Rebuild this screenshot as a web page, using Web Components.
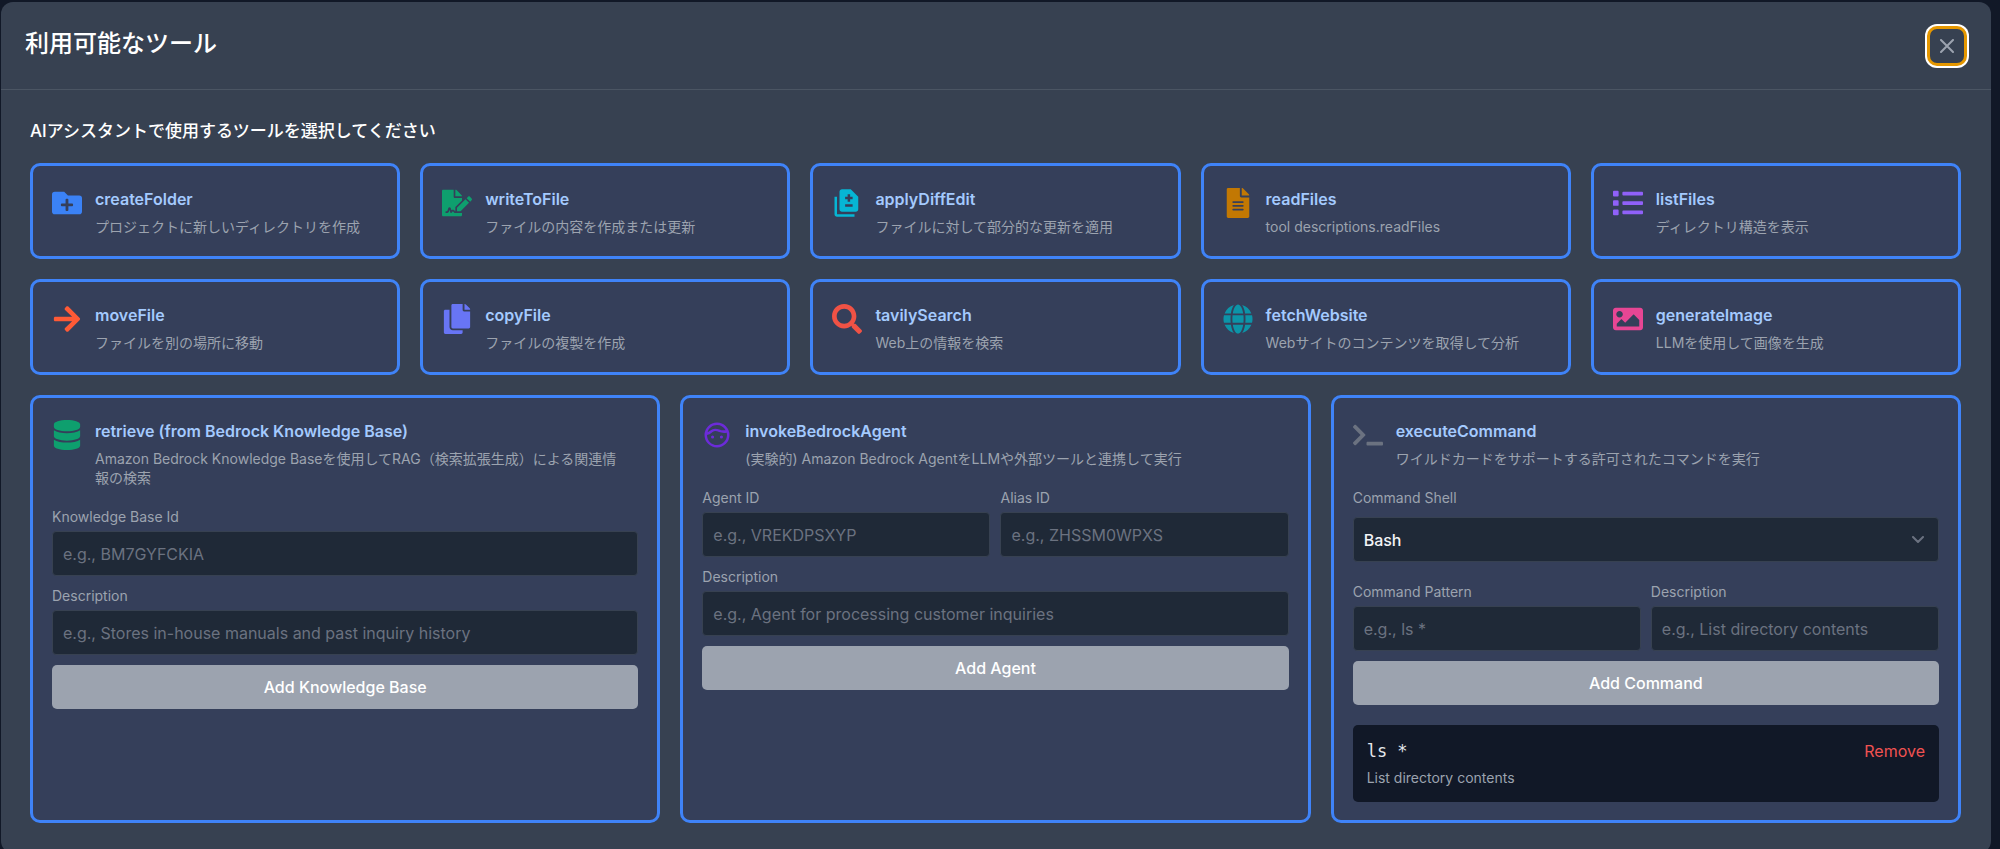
<!DOCTYPE html>
<html lang="ja">
<head>
<meta charset="utf-8">
<title>利用可能なツール</title>
<style>
  body { margin: 0; min-height: 100vh; background: #111827; color: #f9fafb; font-family: Inter, "Noto Sans CJK JP", sans-serif; }
</style>
</head>
<body>
<tools-dialog heading="利用可能なツール">
  <tool-grid columns="5">
    <tool-card icon="folderPlus" color="#3b82f6" name="createFolder">プロジェクトに新しいディレクトリを作成</tool-card>
    <tool-card icon="fileSignature" color="#0e9f6e" name="writeToFile">ファイルの内容を作成または更新</tool-card>
    <tool-card icon="difference" color="#06b6d4" name="applyDiffEdit">ファイルに対して部分的な更新を適用</tool-card>
    <tool-card icon="fileText" color="#c27803" name="readFiles">tool descriptions.readFiles</tool-card>
    <tool-card icon="list" color="#9061f9" name="listFiles">ディレクトリ構造を表示</tool-card>
    <tool-card icon="arrow" color="#ff5a36" name="moveFile">ファイルを別の場所に移動</tool-card>
    <tool-card icon="copy" color="#6875f5" name="copyFile">ファイルの複製を作成</tool-card>
    <tool-card icon="search" color="#f05245" name="tavilySearch">Web上の情報を検索</tool-card>
    <tool-card icon="globe" color="#0c94a8" name="fetchWebsite">Webサイトのコンテンツを取得して分析</tool-card>
    <tool-card icon="image" color="#e74694" name="generateImage">LLMを使用して画像を生成</tool-card>
  </tool-grid>
  <tool-grid columns="3">
    <tool-card icon="database" color="#0e9f6e" name="retrieve (from Bedrock Knowledge Base)">Amazon Bedrock Knowledge Baseを使用してRAG（検索拡張生成）による関連情報の検索
      <tool-form slot="form">
        <text-field label="Knowledge Base Id" placeholder="e.g., BM7GYFCKIA"></text-field>
        <text-field label="Description" placeholder="e.g., Stores in-house manuals and past inquiry history"></text-field>
        <add-button>Add Knowledge Base</add-button>
      </tool-form>
    </tool-card>
    <tool-card icon="face" color="#6c2bd9" name="invokeBedrockAgent">(実験的) Amazon Bedrock AgentをLLMや外部ツールと連携して実行
      <tool-form slot="form">
        <field-row>
          <text-field label="Agent ID" placeholder="e.g., VREKDPSXYP"></text-field>
          <text-field label="Alias ID" placeholder="e.g., ZHSSM0WPXS"></text-field>
        </field-row>
        <text-field label="Description" placeholder="e.g., Agent for processing customer inquiries"></text-field>
        <add-button>Add Agent</add-button>
      </tool-form>
    </tool-card>
    <tool-card icon="terminal" color="#6b7280" name="executeCommand">ワイルドカードをサポートする許可されたコマンドを実行
      <tool-form slot="form">
        <shell-select label="Command Shell"></shell-select>
        <field-row>
          <text-field label="Command Pattern" placeholder="e.g., ls *"></text-field>
          <text-field label="Description" placeholder="e.g., List directory contents"></text-field>
        </field-row>
        <add-button>Add Command</add-button>
        <command-entry pattern="ls *">List directory contents</command-entry>
      </tool-form>
    </tool-card>
  </tool-grid>
</tools-dialog>

<script>
const ICONS = {
  folderPlus: ['0 0 512 512', 'M464,128H272L208,64H48A48,48,0,0,0,0,112V400a48,48,0,0,0,48,48H464a48,48,0,0,0,48-48V176A48,48,0,0,0,464,128ZM359.5,296a16,16,0,0,1-16,16h-64v64a16,16,0,0,1-16,16h-16a16,16,0,0,1-16-16V312h-64a16,16,0,0,1-16-16V280a16,16,0,0,1,16-16h64V200a16,16,0,0,1,16-16h16a16,16,0,0,1,16,16v64h64a16,16,0,0,1,16,16Z'],
  fileSignature: ['0 0 576 512', 'M218.17 424.14c-2.95-5.92-8.09-6.52-10.17-6.52s-7.22.59-10.02 6.19l-7.67 15.34c-6.37 12.78-25.03 11.37-29.48-2.09L144 386.59l-10.61 31.88c-5.89 17.66-22.38 29.53-41 29.53H80c-8.84 0-16-7.16-16-16s7.16-16 16-16h12.39c4.83 0 9.11-3.08 10.64-7.66l18.19-54.64c3.3-9.81 12.44-16.41 22.78-16.41s19.48 6.59 22.77 16.41l13.88 41.64c19.75-16.19 54.06-9.7 66 14.16 1.89 3.78 5.49 5.95 9.36 6.26v-82.12l128-127.09V160H248c-13.2 0-24-10.8-24-24V0H24C10.7 0 0 10.7 0 24v464c0 13.3 10.7 24 24 24h336c13.3 0 24-10.7 24-24v-40l-128-.11c-16.12-.31-30.58-9.28-37.83-23.75zM384 121.9c0-6.3-2.5-12.4-7-16.9L279.1 7c-4.5-4.5-10.6-7-17-7H256v128h128v-6.1zm-96 225.06V416h68.99l161.68-162.78-67.88-67.88L288 346.96zm280.54-179.63l-31.87-31.87c-9.94-9.94-26.07-9.94-36.01 0l-27.25 27.25 67.88 67.88 27.25-27.25c9.95-9.94 9.95-26.07 0-36.01z'],
  difference: ['0 0 24 24', 'M18 23H4c-1.1 0-2-.9-2-2V7h2v14h14v2zM15 1H8c-1.1 0-1.99.9-1.99 2L6 17c0 1.1.89 2 1.99 2H19c1.1 0 2-.9 2-2V7l-6-6zm1.500 14h-6v-2h6v2zm0-6h-2v2h-2V9h-2V7h2V5h2v2h2v2z'],
  fileText: ['0 0 384 512', 'M224 136V0H24C10.7 0 0 10.7 0 24v464c0 13.3 10.7 24 24 24h336c13.3 0 24-10.7 24-24V160H248c-13.2 0-24-10.8-24-24zm64 236c0 6.6-5.4 12-12 12H108c-6.6 0-12-5.4-12-12v-8c0-6.6 5.4-12 12-12h168c6.6 0 12 5.4 12 12v8zm0-64c0 6.6-5.4 12-12 12H108c-6.6 0-12-5.4-12-12v-8c0-6.6 5.4-12 12-12h168c6.6 0 12 5.4 12 12v8zm0-72v8c0 6.6-5.4 12-12 12H108c-6.6 0-12-5.4-12-12v-8c0-6.6 5.4-12 12-12h168c6.6 0 12 5.4 12 12zm96-114.1v6.1H256V0h6.1c6.4 0 12.5 2.5 17 7l97.9 98c4.5 4.5 7 10.6 7 16.9z'],
  list: ['0 0 512 512', 'M80 368H16a16 16 0 0 0-16 16v64a16 16 0 0 0 16 16h64a16 16 0 0 0 16-16v-64a16 16 0 0 0-16-16zm0-320H16A16 16 0 0 0 0 64v64a16 16 0 0 0 16 16h64a16 16 0 0 0 16-16V64a16 16 0 0 0-16-16zm0 160H16a16 16 0 0 0-16 16v64a16 16 0 0 0 16 16h64a16 16 0 0 0 16-16v-64a16 16 0 0 0-16-16zm416 176H176a16 16 0 0 0-16 16v32a16 16 0 0 0 16 16h320a16 16 0 0 0 16-16v-32a16 16 0 0 0-16-16zm0-320H176a16 16 0 0 0-16 16v32a16 16 0 0 0 16 16h320a16 16 0 0 0 16-16V80a16 16 0 0 0-16-16zm0 160H176a16 16 0 0 0-16 16v32a16 16 0 0 0 16 16h320a16 16 0 0 0 16-16v-32a16 16 0 0 0-16-16z'],
  arrow: ['0 0 448 512', 'M190.5 66.9l22.2-22.2c9.4-9.4 24.6-9.4 33.9 0L441 239c9.4 9.4 9.4 24.6 0 33.9L246.6 467.3c-9.4 9.4-24.6 9.4-33.9 0l-22.2-22.2c-9.5-9.5-9.3-25 .4-34.3L311.4 296H24c-13.3 0-24-10.7-24-24v-32c0-13.3 10.7-24 24-24h287.4L190.9 101.2c-9.8-9.3-10-24.8-.4-34.3z'],
  copy: ['0 0 448 512', 'M320 448v40c0 13.255-10.745 24-24 24H24c-13.255 0-24-10.745-24-24V120c0-13.255 10.745-24 24-24h72v296c0 30.879 25.121 56 56 56h168zm0-344V0H152c-13.255 0-24 10.745-24 24v368c0 13.255 10.745 24 24 24h272c13.255 0 24-10.745 24-24V128H344c-13.2 0-24-10.800-24-24zm120.971-31.029L375.029 7.029A24 24 0 0 0 358.059 0H352v96h96v-6.059a24 24 0 0 0-7.029-16.97z'],
  search: ['0 0 512 512', 'M505 442.7L405.3 343c-4.5-4.5-10.6-7-17-7H372c27.6-35.3 44-79.7 44-128C416 93.1 322.9 0 208 0S0 93.1 0 208s93.1 208 208 208c48.3 0 92.7-16.4 128-44v16.3c0 6.4 2.5 12.5 7 17l99.7 99.7c9.4 9.4 24.6 9.4 33.9 0l28.3-28.3c9.4-9.4 9.4-24.6.1-34zM208 336c-70.7 0-128-57.2-128-128 0-70.7 57.2-128 128-128 70.7 0 128 57.2 128 128 0 70.7-57.2 128-128 128z'],
  globe: ['0 0 496 512', 'M336.5 160C322 70.7 287.8 8 248 8s-74 62.7-88.5 152h177zM152 256c0 22.2 1.2 43.5 3.3 64h185.3c2.1-20.5 3.3-41.8 3.3-64s-1.2-43.5-3.3-64H155.3c-2.1 20.5-3.3 41.8-3.3 64zm324.7-96c-28.6-67.9-86.5-120.4-158-141.6 24.4 33.8 41.2 84.7 50 141.6h108zM177.2 18.4C105.8 39.6 47.8 92.1 19.3 160h108c8.7-56.9 25.5-107.8 49.9-141.6zM487.4 192H372.7c2.1 21 3.3 42.5 3.3 64s-1.2 43-3.3 64h114.6c5.5-20.5 8.6-41.8 8.6-64s-3.1-43.5-8.5-64zM120 256c0-21.5 1.2-43 3.3-64H8.6C3.2 212.5 0 233.8 0 256s3.2 43.5 8.6 64h114.6c-2-21-3.2-42.5-3.2-64zm39.5 96c14.5 89.3 48.7 152 88.5 152s74-62.7 88.5-152h-177zm159.3 141.6c71.4-21.2 129.4-73.7 158-141.6h-108c-8.8 56.9-25.6 107.8-50 141.6zM19.3 352c28.6 67.9 86.5 120.4 158 141.6-24.4-33.8-41.2-84.7-50-141.6h-108z'],
  image: ['0 0 512 512', 'M464 448H48c-26.51 0-48-21.49-48-48V112c0-26.51 21.49-48 48-48h416c26.51 0 48 21.49 48 48v288c0 26.51-21.49 48-48 48zM112 120c-30.928 0-56 25.072-56 56s25.072 56 56 56 56-25.072 56-56-25.072-56-56-56zM64 384h384V272l-87.515-87.515c-4.686-4.686-12.284-4.686-16.971 0L208 320l-55.515-55.515c-4.686-4.686-12.284-4.686-16.971 0L64 336v48z'],
  database: ['0 0 448 512', 'M448 73.143v45.714C448 159.143 347.667 192 224 192S0 159.143 0 118.857V73.143C0 32.857 100.333 0 224 0s224 32.857 224 73.143zM448 176v102.857C448 319.143 347.667 352 224 352S0 319.143 0 278.857V176c48.125 33.143 136.208 48.572 224 48.572S399.874 209.143 448 176zm0 160v102.857C448 479.143 347.667 512 224 512S0 479.143 0 438.857V336c48.125 33.143 136.208 48.572 224 48.572S399.874 369.143 448 336z'],
  face: ['0 0 24 24', 'M9.700 13.600a1.250 1.250 0 1 1-2.500 0 1.250 1.250 0 0 1 2.500 0zM16.800 13.600a1.250 1.250 0 1 1-2.500 0 1.250 1.250 0 0 1 2.500 0zM22 12a10 10 0 1 1-20 0 10 10 0 0 1 20 0zM20 12c0-.6-.1-1.300-.25-1.900C15 11 13 8.700 10.500 8.800 7.800 9 7.500 11.600 4 11.900c0 4.510 3.590 8.100 8 8.100s8-3.590 8-8zM4.500 9.500C6.500 9 7.200 7 10.500 6.900c3.300 0 4.500 1.900 8.400 1.200C17.500 5.600 15 4 12 4 8.500 4 5.500 6.300 4.500 9.500z'],
  terminal: ['0 0 640 512', 'M257.981 272.971L63.638 467.314c-9.373 9.373-24.569 9.373-33.941 0L7.029 444.647c-9.357-9.357-9.375-24.522-.04-33.901L161.011 256 6.99 101.255c-9.335-9.379-9.317-24.544.04-33.901l22.667-22.667c9.373-9.373 24.569-9.373 33.941 0L257.981 239.03c9.373 9.372 9.373 24.568 0 33.941zM640 456v-32c0-13.255-10.745-24-24-24H312c-13.255 0-24 10.745-24 24v32c0 13.255 10.745 24 24 24h304c13.255 0 24-10.745 24-24z'],
};

const BASE = '*{box-sizing:border-box}';
const FIELD = `
  :host { display: block; min-width: 0; }
  label { display: block; margin-bottom: 4px; font-size: 14px; line-height: 20px; color: #9ca3af; }
  input, select { display: block; width: 100%; height: 45px; margin: 0; padding: 0 10px; border: 1px solid #374151; border-radius: 4px; background: #1f2937; color: #f3f4f6; font: 400 16px/24px Inter, "Noto Sans CJK JP", sans-serif; outline: 0; }
  input::placeholder { color: #6b7280; opacity: 1; }`;

function define(name, render) {
  customElements.define(name, class extends HTMLElement {
    connectedCallback() {
      if (this.shadowRoot) return;
      this.attachShadow({ mode: 'open' }).innerHTML = render(this);
    }
  });
}

define('tools-dialog', el => `<style>${BASE}
  :host { display: block; margin: 2px 9px 0 1px; min-height: calc(100vh - 2px); background: #374151; border-radius: 12px; }
  header { display: flex; justify-content: space-between; align-items: flex-start; height: 88px; padding: 20px 24px 0; border-bottom: 1px solid #4b5563; }
  h2 { margin: 0; font-size: 24px; line-height: 44px; font-weight: 500; color: #fff; }
  button { display: grid; place-items: center; width: 40px; height: 40px; margin-top: 4px; padding: 0; border: 3px solid #e59700; border-radius: 10px; background: #374151; color: #9ca3af; outline: 0; box-shadow: 0 0 0 2px #fff; }
  svg { width: 14px; height: 14px; }
  main { display: grid; gap: 20px; padding: 30px 30px 30px 29px; }
  p { margin: 0 0 1px; font-size: 17px; line-height: 22px; font-weight: 500; color: #fff; }
  </style>
  <header><h2>${el.getAttribute('heading')}</h2>
  <button type="button" aria-label="Close"><svg viewBox="0 0 14 14" fill="none" stroke="currentColor" stroke-width="2" stroke-linecap="round"><path d="M1 1l12 12M13 1L1 13"/></svg></button></header>
  <main><p>AIアシスタントで使用するツールを選択してください</p><slot></slot></main>`);

define('tool-grid', el => `<style>
  :host { display: grid; grid-template-columns: repeat(${el.getAttribute('columns')}, minmax(0, 1fr)); gap: 20px; }
  </style><slot></slot>`);

define('tool-card', el => {
  const [box, path] = ICONS[el.getAttribute('icon')];
  return `<style>${BASE}
  :host { display: block; box-sizing: border-box; min-height: 96px; padding: 21px 19px 18px; border: 3px solid #3f83f8; border-radius: 10px; background: #353f5a; }
  .head { display: grid; grid-template-columns: 30px minmax(0, 1fr); column-gap: 13px; }
  svg { width: 30px; height: 30px; margin-top: 1px; fill: ${el.getAttribute('color')}; }
  .text { padding-right: 12px; }
  h3 { margin: 0 0 5px; font-size: 16px; line-height: 25px; font-weight: 600; color: #a4cafe; }
  p { margin: 0; font-size: 14px; line-height: 19px; color: #9ca3af; }
  </style>
  <div class="head"><svg viewBox="${box}" aria-hidden="true"><path fill-rule="evenodd" d="${path}"/></svg>
  <div class="text"><h3>${el.getAttribute('name')}</h3><p><slot></slot></p></div></div>
  <slot name="form"></slot>`;
});

define('tool-form', () => `<style>:host { display: grid; gap: 10px; margin-top: 20px; }</style><slot></slot>`);
define('field-row', () => `<style>:host { display: grid; grid-template-columns: 1fr 1fr; gap: 10px; }</style><slot></slot>`);

define('text-field', el => `<style>${BASE}${FIELD}</style>
  <label for="f">${el.getAttribute('label')}</label><input id="f" type="text" placeholder="${el.getAttribute('placeholder')}">`);

define('shell-select', el => `<style>${BASE}${FIELD}
  :host { margin-bottom: 10px; }
  label { margin-bottom: 9px; }
  .wrap { display: grid; align-items: center; }
  .wrap > * { grid-area: 1 / 1; }
  select { appearance: none; font-weight: 500; }
  svg { justify-self: end; width: 12px; height: 8px; margin-right: 15px; pointer-events: none; }
  </style>
  <label for="s">${el.getAttribute('label')}</label>
  <div class="wrap"><select id="s"><option>Bash</option></select>
  <svg viewBox="0 0 12 8" fill="none" stroke="#6b7280" stroke-width="2" stroke-linecap="round" stroke-linejoin="round"><path d="M1 1l5 5 5-5"/></svg></div>`);

define('add-button', () => `<style>${BASE}
  :host { display: block; }
  button { display: block; width: 100%; height: 44px; padding: 0; border: 0; border-radius: 5px; background: #9ca3af; color: #fff; font: 500 16px/24px Inter, "Noto Sans CJK JP", sans-serif; }
  </style><button type="button"><slot></slot></button>`);

define('command-entry', el => `<style>${BASE}
  :host { display: flex; justify-content: space-between; align-items: flex-start; margin-top: 10px; padding: 14px; border-radius: 5px; background: #111827; }
  code { display: block; margin-bottom: 5px; font: 17px/24px "DejaVu Sans Mono", monospace; color: #e5e7eb; }
  p { margin: 0; font-size: 14px; line-height: 20px; color: #9ca3af; }
  button { padding: 0; border: 0; background: none; color: #f05252; font: 400 16px/24px Inter, sans-serif; }
  </style><div><code>${el.getAttribute('pattern')}</code><p><slot></slot></p></div><button type="button">Remove</button>`);
</script>
</body>
</html>
